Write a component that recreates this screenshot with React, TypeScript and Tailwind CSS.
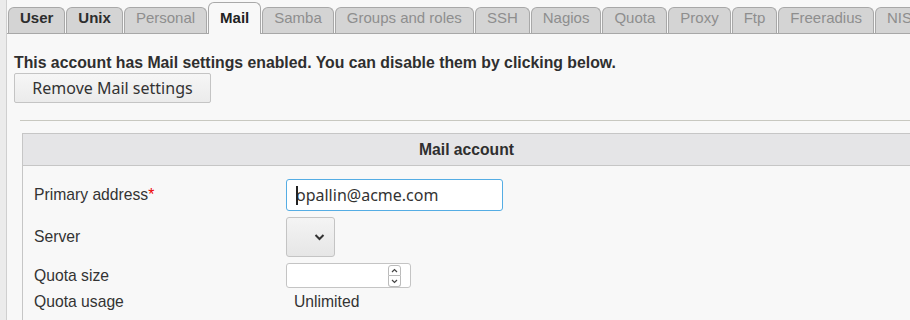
import React from 'react';

const tabs = [
    { label: 'User', bold: true },
    { label: 'Unix', bold: true },
    { label: 'Personal' },
    { label: 'Mail', active: true },
    { label: 'Samba' },
    { label: 'Groups and roles' },
    { label: 'SSH' },
    { label: 'Nagios' },
    { label: 'Quota' },
    { label: 'Proxy' },
    { label: 'Ftp' },
    { label: 'Freeradius' },
    { label: 'NIS' },
];

const Tab = ({ label, bold, active }: { label: string; bold?: boolean; active?: boolean }) => {
    if (active) {
        return (
            <div className="relative top-[1px] h-[32px] px-[11px] pt-[6px] leading-[18px] bg-[#f8f8f8] border border-b-0 border-[#a8a8a8] rounded-t-[6px] font-bold text-[#222] shrink-0">
                {label}
            </div>
        );
    }
    return (
        <div
            className={`h-[26px] px-[11px] pt-[1px] leading-[18px] bg-[#d4d4d4] border border-b-0 border-[#a8a8a8] rounded-t-[6px] shrink-0 ${
                bold ? 'font-bold text-[#2d2d2d]' : 'text-[#8e8e8e]'
            }`}
        >
            {label}
        </div>
    );
};

export default function App() {
    return (
        <div className="flex w-[910px] h-[320px] overflow-hidden bg-[#f8f8f8] font-['Liberation_Sans',Arial,sans-serif] text-[15px] text-[#333]">
            <div className="w-[7px] shrink-0 bg-[#ebebeb] border-r border-[#cfcfcf]"></div>
            <div className="flex-1 min-w-0">
                <div className="flex items-end gap-[1px] pl-[1px] pt-[1px] h-[34px] border-b border-[#a8a8a8]">
                    {tabs.map((t) => (
                        <Tab key={t.label} {...t} />
                    ))}
                </div>

                <div className="pl-[7px] pt-[20px]">
                    <p className="font-bold text-[15.8px] leading-[18px] text-[#2f2f2f] whitespace-nowrap">
                        This account has Mail settings enabled. You can disable them by clicking below.
                    </p>
                    <button className="mt-[1px] h-[30px] w-[197px] rounded-[2px] border border-[#c4c4c4] bg-gradient-to-b from-[#f6f6f6] to-[#ebebeb] font-['Noto_Sans',sans-serif] text-[16px] text-[#333]">
                        Remove Mail settings
                    </button>

                    <div className="ml-[6px] mt-[17px] border-t border-[#c8c8c0]"></div>

                    <div className="ml-[8px] mt-[12px] border border-r-0 border-[#c6c6c6] text-[15.7px]">
                        <div className="h-[32px] flex items-center justify-center bg-[#e5e5e7] border-b border-[#c6c6c6] font-bold text-[#2f2f2f]">
                            Mail account
                        </div>
                        <div className="grid grid-cols-[263px_1fr] gap-y-[6px] pt-[13px] pb-[10px] items-center">
                            <div className="pl-[11px]">
                                Primary address<span className="text-[#e00]">*</span>
                            </div>
                            <div className="relative w-[217px] h-[32px] rounded-[3px] border border-[#55ade4] bg-white flex items-center pl-[9px] font-['Noto_Sans',sans-serif] text-[16px] text-[#333]">
                                <span className="absolute left-[9px] top-[6px] w-[2px] h-[19px] bg-[#222]"></span>
                                opallin@acme.com
                            </div>

                            <div className="pl-[11px]">Server</div>
                            <div className="w-[49px] h-[40px] rounded-[3px] border border-[#c4c4c4] bg-gradient-to-b from-[#f4f4f4] to-[#e6e6e6] flex items-center justify-end pr-[9px]">
                                <svg width="11" height="8" viewBox="0 0 11 8">
                                    <path d="M1.5 2 L5.5 6 L9.5 2" fill="none" stroke="#333" strokeWidth="2" />
                                </svg>
                            </div>

                            <div className="pl-[11px]">Quota size</div>
                            <div className="relative w-[125px] h-[25px] rounded-[3px] border border-[#c4c4c4] bg-white">
                                <div className="absolute left-[101px] top-[1px] w-[13px] flex flex-col">
                                    <div className="h-[11px] border border-[#bbb] rounded-t-[3px] bg-white flex items-center justify-center">
                                        <svg width="7" height="5" viewBox="0 0 7 5">
                                            <path d="M1 4 L3.5 1.5 L6 4" fill="none" stroke="#444" strokeWidth="1.2" />
                                        </svg>
                                    </div>
                                    <div className="h-[11px] border border-t-0 border-[#bbb] rounded-b-[3px] bg-white flex items-center justify-center">
                                        <svg width="7" height="5" viewBox="0 0 7 5">
                                            <path d="M1 1 L3.5 3.5 L6 1" fill="none" stroke="#444" strokeWidth="1.2" />
                                        </svg>
                                    </div>
                                </div>
                            </div>

                            <div className="pl-[11px] -mt-[2px] leading-[20px]">Quota usage</div>
                            <div className="pl-[8px] -mt-[2px] leading-[20px]">Unlimited</div>
                        </div>
                    </div>
                </div>
            </div>
        </div>
    );
}
